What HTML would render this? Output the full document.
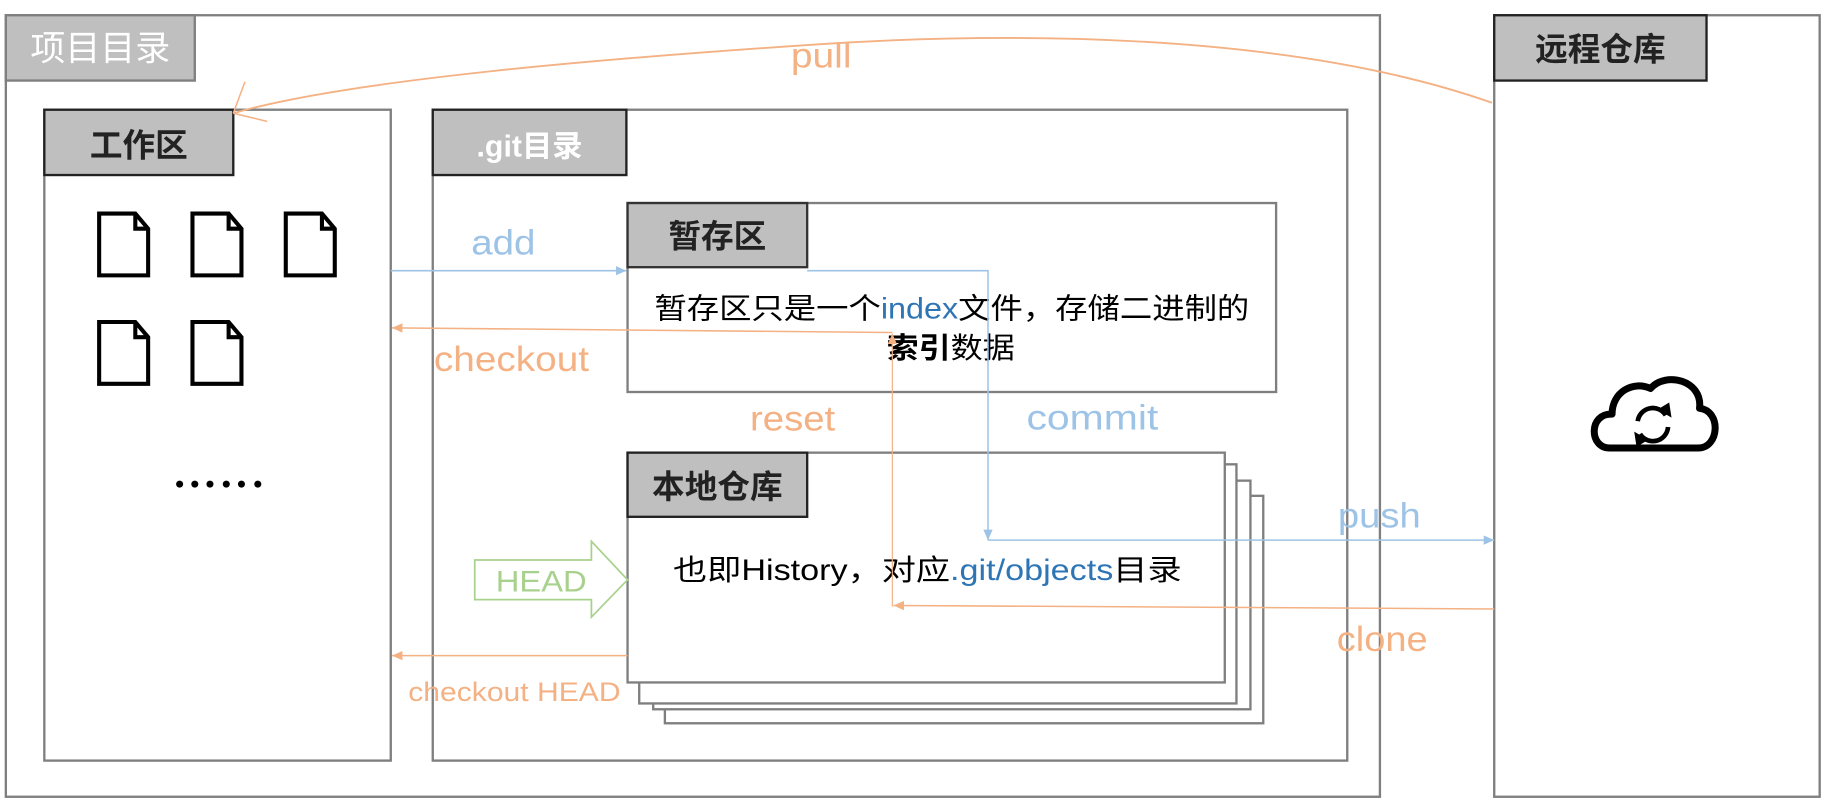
<!DOCTYPE html>
<html><head><meta charset="utf-8"><style>
html,body{margin:0;padding:0;background:#fff;}
svg{display:block;}
text{font-family:"Liberation Sans","Noto Sans CJK SC",sans-serif;}
</style></head><body>
<svg width="1829" height="805" viewBox="0 0 1568 690" xmlns="http://www.w3.org/2000/svg">
<defs>
<marker id="ab" markerWidth="10" markerHeight="10" refX="9" refY="5" orient="auto" markerUnits="userSpaceOnUse"><path d="M0,1 L9,5 L0,9 z" fill="#9dc3e6"/></marker>
<marker id="ao" markerWidth="10" markerHeight="10" refX="9" refY="5" orient="auto" markerUnits="userSpaceOnUse"><path d="M0,1 L9,5 L0,9 z" fill="#f4b183"/></marker>
</defs>
<g fill="none" stroke="#7f7f7f" stroke-width="2">
<rect x="5" y="13" width="1178" height="670"/>
<rect x="1281" y="13" width="279" height="670"/>
<rect x="38" y="94" width="297" height="558"/>
<rect x="371" y="94" width="784" height="558"/>
<rect x="538" y="174" width="556" height="162"/>
<rect x="570" y="425" width="513" height="195" fill="#fff"/>
<rect x="560" y="412" width="512" height="196" fill="#fff"/>
<rect x="548" y="398" width="512" height="205" fill="#fff"/>
<rect x="538" y="388" width="512" height="197" fill="#fff"/>
</g>
<g stroke="#595959" stroke-width="2" fill="#bfbfbf">
<rect x="5" y="13" width="162" height="56" stroke="#7f7f7f"/>
<rect x="1281" y="13" width="182" height="56" stroke="#222"/>
<rect x="38" y="94" width="162" height="56" stroke="#222"/>
<rect x="371" y="94" width="166" height="56" stroke="#222"/>
<rect x="538" y="174" width="154" height="55" stroke="#333"/>
<rect x="538" y="388" width="154" height="55" stroke="#222"/>
</g>
<text x="86" y="52" font-size="30" fill="#fff" text-anchor="middle">项目目录</text>
<text x="1372" y="52" font-size="28" font-weight="bold" fill="#222" text-anchor="middle">远程仓库</text>
<text x="119" y="134" font-size="28" font-weight="bold" fill="#222" text-anchor="middle">工作区</text>
<text x="454" y="134" font-size="26" font-weight="bold" fill="#fff" text-anchor="middle">.git目录</text>
<text x="615" y="212" font-size="28" font-weight="bold" fill="#222" text-anchor="middle">暂存区</text>
<text x="615" y="427" font-size="28" font-weight="bold" fill="#222" text-anchor="middle">本地仓库</text>
<g fill="#fff" stroke="#000" stroke-width="3.5" stroke-linejoin="miter">
<path d="M85,183 H116 L127,196 V236 H85 Z M116,183 V196 H127"/>
<path d="M165,183 H196 L207,196 V236 H165 Z M196,183 V196 H207"/>
<path d="M245,183 H276 L287,196 V236 H245 Z M276,183 V196 H287"/>
<path d="M85,276 H116 L127,289 V329 H85 Z M116,276 V289 H127"/>
<path d="M165,276 H196 L207,289 V329 H165 Z M196,276 V289 H207"/>
</g>
<g fill="#000"><circle cx="154" cy="415" r="3"/><circle cx="167" cy="415" r="3"/><circle cx="180" cy="415" r="3"/><circle cx="194" cy="415" r="3"/><circle cx="207" cy="415" r="3"/><circle cx="221" cy="415" r="3"/></g>
<text x="561" y="273" font-size="25" fill="#000" textLength="510" lengthAdjust="spacingAndGlyphs">暂存区只是一个<tspan fill="#2e75b6">index</tspan>文件，存储二进制的</text>
<text x="760" y="307" font-size="25" fill="#000" textLength="110" lengthAdjust="spacingAndGlyphs"><tspan font-weight="bold">索引</tspan>数据</text>
<text x="577" y="497" font-size="25" fill="#000" textLength="436" lengthAdjust="spacingAndGlyphs">也即History，对应<tspan fill="#2e75b6">.git/objects</tspan>目录</text>
<g fill="none" stroke-width="1.3">
<path d="M335,232 H537" stroke="#9dc3e6" marker-end="url(#ab)"/>
<path d="M692,232 H847 V463" stroke="#9dc3e6" marker-end="url(#ab)"/>
<path d="M847,463 H1281" stroke="#9dc3e6" marker-end="url(#ab)"/>
<path d="M765,285 L336,281" stroke="#f4b183" marker-end="url(#ao)"/>
<path d="M765,520 V286" stroke="#f4b183" marker-end="url(#ao)" stroke-width="1"/>
<path d="M1281,522 L766,519" stroke="#f4b183" marker-end="url(#ao)"/>
<path d="M538,562 H336" stroke="#f4b183" marker-end="url(#ao)"/>
<path d="M1279,88 C1100,25 850,28 700,38 C520,50 300,68 200,97" stroke="#f4b183" stroke-width="1.6"/>
<path d="M200,97 L210,70 M200,97 L229,104" stroke="#f4b183" stroke-width="1.3"/>
</g>
<text x="678" y="58" font-size="30" fill="#f4b183" textLength="52" lengthAdjust="spacingAndGlyphs">pull</text>
<text x="404" y="218" font-size="30" fill="#9dc3e6" textLength="55" lengthAdjust="spacingAndGlyphs">add</text>
<text x="372" y="318" font-size="30" fill="#f4b183" textLength="133" lengthAdjust="spacingAndGlyphs">checkout</text>
<text x="643" y="369" font-size="30" fill="#f4b183" textLength="73" lengthAdjust="spacingAndGlyphs">reset</text>
<text x="880" y="368" font-size="30" fill="#9dc3e6" textLength="113" lengthAdjust="spacingAndGlyphs">commit</text>
<text x="1147" y="452" font-size="30" fill="#9dc3e6" textLength="71" lengthAdjust="spacingAndGlyphs">push</text>
<text x="1146" y="558" font-size="30" fill="#f4b183" textLength="78" lengthAdjust="spacingAndGlyphs">clone</text>
<text x="350" y="601" font-size="23" fill="#f4b183" textLength="182" lengthAdjust="spacingAndGlyphs">checkout HEAD</text>
<path d="M407,480 H507 V464 L538,497 L507,529 V514 H407 Z" fill="none" stroke="#a9d18e" stroke-width="1.5"/>
<text x="425" y="507" font-size="25" fill="#a9d18e" textLength="78" lengthAdjust="spacingAndGlyphs">HEAD</text>
<path d="M1380,384 C1362,384 1362,354 1382,355 C1382,336 1400,326 1415,333 C1428,318 1460,326 1457,350 C1476,352 1474,384 1456,384 Z" fill="none" stroke="#000" stroke-width="6" stroke-linejoin="round"/>
<path d="M1404,361 A13,13 0 0 1 1428,356 M1430,366 A13,13 0 0 1 1406,372" fill="none" stroke="#000" stroke-width="4"/>
<path d="M1421,351 L1433,358 L1431,345 Z M1413,377 L1401,370 L1403,383 Z" fill="#000"/>
</svg>
</body></html>
